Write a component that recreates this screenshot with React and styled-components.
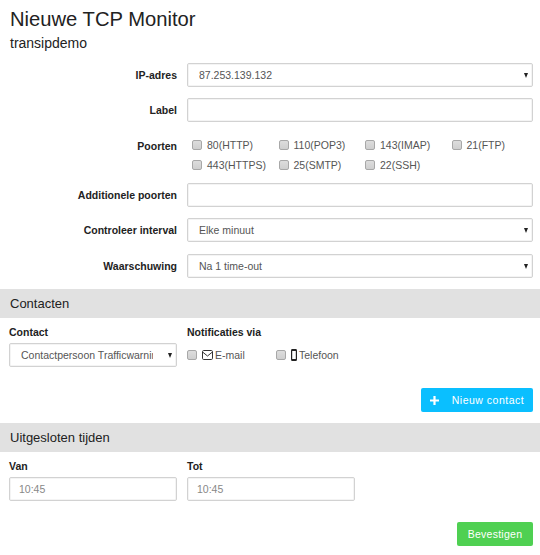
import React from "react";
import styled, { createGlobalStyle } from "styled-components";

const Global = createGlobalStyle`
  html, body { margin: 0; padding: 0; background: #fff; }
  body { font-family: "Liberation Sans", Arial, sans-serif; color: #222; }
`;

const Page = styled.form`
  width: 540px;
  height: 555px;
  overflow: hidden;
  display: flex;
  flex-direction: column;
`;

const Header = styled.header`
  padding: 7px 10px 0;
`;
const Title = styled.h1`
  margin: 0;
  font-size: 20.2px;
  line-height: 24px;
  font-weight: 400;
  color: #222;
`;
const Subtitle = styled.h2`
  margin: 4px 0 0;
  font-size: 14px;
  line-height: 16px;
  font-weight: 400;
  color: #222;
`;

const Fields = styled.div`
  display: flex;
  flex-direction: column;
  gap: 11px;
  margin-top: 12px;
  padding: 0 7px 0 10px;
`;
const Row = styled.div`
  display: grid;
  grid-template-columns: 167px 346px;
  column-gap: 10px;
  align-items: ${(p) => (p.$top ? "start" : "center")};
  ${(p) => p.$push && `margin-top: ${p.$push};`}
`;
const RowLabel = styled.label`
  font-size: 10.5px;
  font-weight: 700;
  color: #222;
  text-align: right;
  line-height: 14px;
  ${(p) => p.$top && "padding-top: 6px;"}
`;

const Input = styled.input`
  box-sizing: border-box;
  display: block;
  width: 100%;
  height: 24px;
  padding: 0 ${(p) => (p.$time ? "9px" : "12px")};
  background: #fff;
  border: 1px solid #d2d2d2;
  border-radius: 2px;
  box-shadow: inset 0 0 0 1px #f4f4f4;
  font-family: "Liberation Sans", Arial, sans-serif;
  font-size: 10.5px;
  color: ${(p) => (p.$time ? "#888" : "#555")};
  outline: none;
`;
const SelectWrap = styled.div`
  position: relative;
  width: 100%;
  &::after {
    content: "";
    position: absolute;
    right: 5px;
    top: 10px;
    border-left: 2.5px solid transparent;
    border-right: 2.5px solid transparent;
    border-top: 5px solid #222;
    pointer-events: none;
  }
`;
const Select = styled.select`
  box-sizing: border-box;
  display: block;
  width: 100%;
  height: 24px;
  appearance: none;
  padding: 0 ${(p) => (p.$compact ? "23px" : "20px")} 0 11px;
  background: #fff;
  border: 1px solid #d2d2d2;
  border-radius: 2px;
  box-shadow: inset 0 0 0 1px #f4f4f4;
  font-family: "Liberation Sans", Arial, sans-serif;
  font-size: 10.5px;
  color: #555;
  outline: none;
`;

const Ports = styled.div`
  display: grid;
  grid-template-columns: repeat(4, 86.5px);
  row-gap: 6px;
  padding: 5px 0 0 5px;
`;
const CheckLabel = styled.label`
  display: inline-flex;
  align-items: center;
  gap: 5px;
  height: 14px;
  font-size: 10.5px;
  color: #555;
  white-space: nowrap;
`;
const Check = styled.input.attrs({ type: "checkbox" })`
  appearance: none;
  box-sizing: border-box;
  flex: none;
  width: 10px;
  height: 10px;
  margin: 0;
  background: linear-gradient(#ddd, #cfcfcf);
  border: 1px solid #a8a8a8;
  border-radius: 2px;
`;

const Band = styled.h3`
  margin: ${(p) => p.$mt} 0 0;
  height: 29px;
  padding: 0 10px;
  background: #e1e1e1;
  font-size: 13px;
  font-weight: 400;
  line-height: 29px;
  color: #222;
`;

const Columns = styled.div`
  display: flex;
  padding: 0 9px;
  margin-top: 7px;
`;
const Col = styled.div`
  width: ${(p) => p.$w};
  margin-right: 10px;
  display: flex;
  flex-direction: column;
  gap: 4px;
`;
const ColLabel = styled.label`
  font-size: 10.5px;
  font-weight: 700;
  line-height: 14px;
  color: #222;
`;
const Notify = styled.div`
  display: flex;
  height: 24px;
  align-items: center;
`;
const NotifyItem = styled.div`
  width: 89px;
`;
const IconSvg = styled.svg`
  flex: none;
  display: block;
`;
const IconText = styled.span`
  margin-left: -3px;
`;

const Actions = styled.div`
  display: flex;
  justify-content: flex-end;
  padding: 0 7px;
  margin-top: ${(p) => p.$mt};
`;
const Button = styled.button`
  height: 24px;
  padding: 0;
  width: ${(p) => p.$w};
  border: none;
  border-radius: 2px;
  background: ${(p) => p.$bg};
  color: #fff;
  font-family: "Liberation Sans", Arial, sans-serif;
  font-size: 10.5px;
  letter-spacing: ${(p) => p.$spacing};
  display: flex;
  align-items: center;
  justify-content: center;
  gap: 13px;
`;
const Plus = styled.svg`
  display: block;
`;

export default function App() {
  const ports = ["80(HTTP)", "110(POP3)", "143(IMAP)", "21(FTP)", "443(HTTPS)", "25(SMTP)", "22(SSH)"];
  return (
    <Page onSubmit={(e) => e.preventDefault()}>
      <Global />
      <Header>
        <Title>Nieuwe TCP Monitor</Title>
        <Subtitle>transipdemo</Subtitle>
      </Header>
      <Fields>
        <Row>
          <RowLabel>IP-adres</RowLabel>
          <SelectWrap>
            <Select defaultValue="87.253.139.132"><option>87.253.139.132</option></Select>
          </SelectWrap>
        </Row>
        <Row>
          <RowLabel>Label</RowLabel>
          <Input />
        </Row>
        <Row $top>
          <RowLabel $top>Poorten</RowLabel>
          <Ports>
            {ports.map((p) => (
              <CheckLabel key={p}><Check />{p}</CheckLabel>
            ))}
          </Ports>
        </Row>
        <Row>
          <RowLabel>Additionele poorten</RowLabel>
          <Input />
        </Row>
        <Row>
          <RowLabel>Controleer interval</RowLabel>
          <SelectWrap><Select><option>Elke minuut</option></Select></SelectWrap>
        </Row>
        <Row $push="1px">
          <RowLabel>Waarschuwing</RowLabel>
          <SelectWrap><Select><option>Na 1 time-out</option></Select></SelectWrap>
        </Row>
      </Fields>

      <Band $mt="11px">Contacten</Band>
      <Columns>
        <Col $w="168px">
          <ColLabel>Contact</ColLabel>
          <SelectWrap>
            <Select $compact><option>Contactpersoon Trafficwarning</option></Select>
          </SelectWrap>
        </Col>
        <Col $w="240px">
          <ColLabel>Notificaties via</ColLabel>
          <Notify>
            <NotifyItem>
              <CheckLabel>
                <Check />
                <IconSvg width="11" height="10" viewBox="0 0 11 10" fill="none" stroke="#333" strokeWidth="1">
                  <rect x="0.5" y="0.5" width="10" height="9" rx="1.2" />
                  <path d="M0.8 2.2 L5.5 6 L10.2 2.2" />
                </IconSvg>
                <IconText>E-mail</IconText>
              </CheckLabel>
            </NotifyItem>
            <NotifyItem>
              <CheckLabel>
                <Check />
                <IconSvg width="6" height="12" viewBox="0 0 6 12" fill="none">
                  <rect x="0.6" y="0.6" width="4.8" height="10.8" rx="1.2" stroke="#222" strokeWidth="1.2" />
                  <rect x="0.4" y="0" width="5.2" height="2" rx="0.9" fill="#222" />
                  <rect x="0.4" y="10" width="5.2" height="2" rx="0.9" fill="#222" />
                </IconSvg>
                <IconText>Telefoon</IconText>
              </CheckLabel>
            </NotifyItem>
          </Notify>
        </Col>
      </Columns>
      <Actions $mt="21px">
        <Button type="button" $w="112px" $bg="#0abfff" $spacing="0.5px">
          <Plus width="9" height="9" viewBox="0 0 9 9"><path d="M3.4 0h2.2v3.4H9v2.2H5.6V9H3.4V5.6H0V3.4h3.4z" fill="#fff" /></Plus>
          Nieuw contact
        </Button>
      </Actions>

      <Band $mt="11px">Uitgesloten tijden</Band>
      <Columns>
        <Col $w="168px">
          <ColLabel>Van</ColLabel>
          <Input $time defaultValue="10:45" />
        </Col>
        <Col $w="168px">
          <ColLabel>Tot</ColLabel>
          <Input $time defaultValue="10:45" />
        </Col>
      </Columns>
      <Actions $mt="21px">
        <Button type="button" $w="76px" $bg="#4fd052" $spacing="0.25px">Bevestigen</Button>
      </Actions>
    </Page>
  );
}
